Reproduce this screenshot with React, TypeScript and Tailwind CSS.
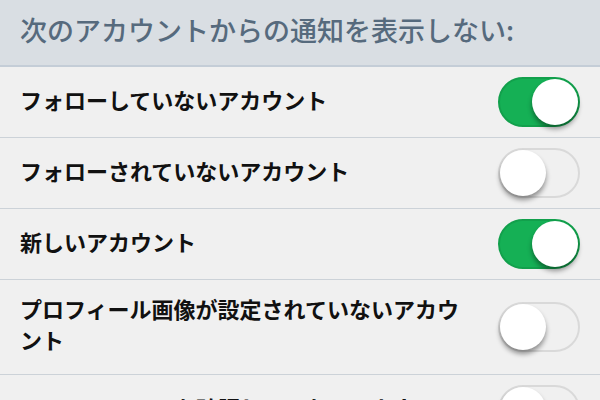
import React, { useState } from 'react';

const items = [
  { label: 'フォローしていないアカウント', on: true },
  { label: 'フォローされていないアカウント', on: false },
  { label: '新しいアカウント', on: true },
  { label: 'プロフィール画像が設定されていないアカウント', on: false },
  { label: 'メールアドレスを確認していないアカウント', on: false },
  { label: '電話番号を確認していないアカウント', on: false },
];

function Toggle({ on, onClick }: { on: boolean; onClick: () => void }) {
  return (
    <button
      onClick={onClick}
      className={`relative shrink-0 w-[82px] h-[50px] -my-[10px] rounded-full border-2 transition-colors ${
        on ? 'bg-[#15b055] border-[#12a04c]' : 'bg-[#f0f0f0] border-[#d9d9d9]'
      }`}
    >
      <span
        className={`absolute top-[0px] w-[46px] h-[46px] rounded-full bg-white shadow-[0_4px_5px_rgba(0,0,0,0.4)] ${
          on ? 'right-[0px]' : 'left-[0px]'
        }`}
      />
    </button>
  );
}

export default function App() {
  const [state, setState] = useState(items.map(i => i.on));

  return (
    <div
      className="w-[600px] h-[400px] overflow-hidden bg-[#f0f0f0]"
      style={{ fontFamily: '"Noto Sans CJK JP", "Noto Sans", sans-serif' }}
    >
      <header className="h-[67px] bg-[#d9dee3] border-b-2 border-[#c4cdd7] flex items-center px-5 pb-[6px]">
        <h1 className="text-[27px] font-medium text-[#566a7d] leading-none">
          次のアカウントからの通知を表示しない:
        </h1>
      </header>

      <ul>
        {items.map((item, i) => (
          <li
            key={item.label}
            className="min-h-[71px] py-[16px] px-5 flex items-center gap-[30px] border-b border-[#ccd2d8]"
          >
            <span className="flex-1 -mt-[3px] mb-[3px] text-[22px] leading-[31px] font-semibold text-[#111]">
              {item.label}
            </span>
            <Toggle
              on={state[i]}
              onClick={() => setState(s => s.map((v, j) => (j === i ? !v : v)))}
            />
          </li>
        ))}
      </ul>
    </div>
  );
}
